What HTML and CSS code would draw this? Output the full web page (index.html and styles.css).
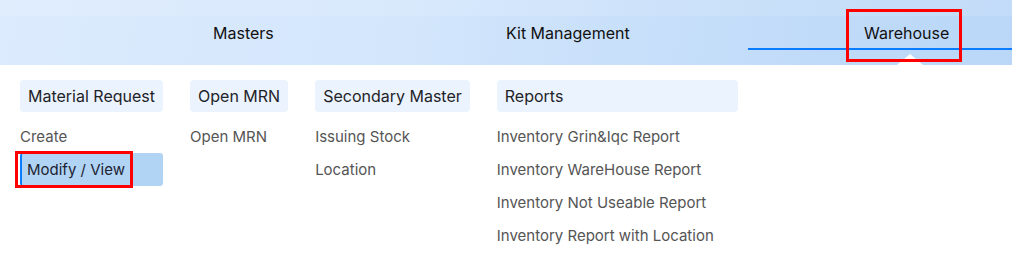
FILE: index.html
```html
<!DOCTYPE html>
<html lang="en">
<head>
<meta charset="utf-8">
<title>Warehouse menu</title>
<link rel="stylesheet" href="styles.css">
</head>
<body>
<header class="topbar">
  <nav class="tabs">
    <a class="tab tab-masters">Masters</a>
    <a class="tab tab-kit">Kit Management</a>
    <a class="tab tab-warehouse">
      <span class="tab-label">Warehouse</span>
      <span class="caret"></span>
      <span class="mark mark-tab"></span>
    </a>
  </nav>
</header>
<main class="mega">
  <section class="col col-mr">
    <div class="col-head">Material Request</div>
    <ul class="items">
      <li class="item">Create</li>
      <li class="item current">Modify / View<span class="mark mark-item"></span></li>
    </ul>
  </section>
  <section class="col col-mrn">
    <div class="col-head">Open MRN</div>
    <ul class="items">
      <li class="item">Open MRN</li>
    </ul>
  </section>
  <section class="col col-sec">
    <div class="col-head">Secondary Master</div>
    <ul class="items">
      <li class="item">Issuing Stock</li>
      <li class="item">Location</li>
    </ul>
  </section>
  <section class="col col-rep">
    <div class="col-head">Reports</div>
    <ul class="items">
      <li class="item">Inventory Grin&amp;Iqc Report</li>
      <li class="item">Inventory WareHouse Report</li>
      <li class="item">Inventory Not Useable Report</li>
      <li class="item">Inventory Report with Location</li>
    </ul>
  </section>
</main>
</body>
</html>
```

FILE: styles.css
```css
* { box-sizing: border-box; }

html, body {
  margin: 0;
  padding: 0;
  background: #ffffff;
  font-family: Inter, "Noto Sans", "Liberation Sans", sans-serif;
}

.topbar {
  position: relative;
  height: 65px;
  background: linear-gradient(100deg, #dcebfd 0%, #d3e6fc 40%, #c2dcf9 75%, #bad7f8 100%);
}

.topbar::before {
  content: "";
  position: absolute;
  left: 0; right: 0; top: 0;
  height: 16px;
  background: rgba(255, 255, 255, 0.12);
}

.tabs {
  display: grid;
  grid-template-columns: 506px 242px 1fr;
  height: 65px;
}

.tab {
  position: relative;
  display: flex;
  align-items: center;
  font-size: 16px;
  color: #111111;
  text-decoration: none;
}

.tab-masters { padding-left: 213px; }
.tab-kit { padding-left: 0; }
.tab-warehouse { padding-left: 116px; }

.tab-warehouse::after {
  content: "";
  position: absolute;
  left: 0; right: 0;
  top: 48px;
  height: 2px;
  background: #0a7cff;
}

.caret {
  position: absolute;
  left: 149px;
  top: 54px;
  width: 0;
  height: 0;
  border-left: 13px solid transparent;
  border-right: 13px solid transparent;
  border-bottom: 11px solid #ffffff;
}

.mark {
  position: absolute;
  border: 3px solid #ff0000;
  pointer-events: none;
}

.mark-tab {
  left: 98px;
  top: 9px;
  width: 116px;
  height: 53px;
  z-index: 2;
}

.mega {
  display: flex;
  align-items: flex-start;
  gap: 27px;
  padding: 15px 0 0 20px;
}

.col {
  display: flex;
  flex-direction: column;
}

.col-rep { min-width: 241px; }

.col-head {
  height: 32px;
  line-height: 32px;
  padding: 0 8px;
  border-radius: 4px;
  background: #eaf3fe;
  font-size: 16px;
  color: #1f2328;
  white-space: nowrap;
}

.items {
  list-style: none;
  margin: 8px 0 0;
  padding: 0;
}

.item {
  position: relative;
  height: 33px;
  line-height: 33px;
  font-size: 15px;
  color: #555555;
  white-space: nowrap;
}

.item.current {
  background: #b2d4f4;
  border-left: 2px solid #0a7cff;
  border-radius: 3px;
  padding-left: 5px;
  color: #1b2333;
}

.mark-item {
  left: -7px;
  top: -2px;
  width: 118px;
  height: 37px;
}
```
